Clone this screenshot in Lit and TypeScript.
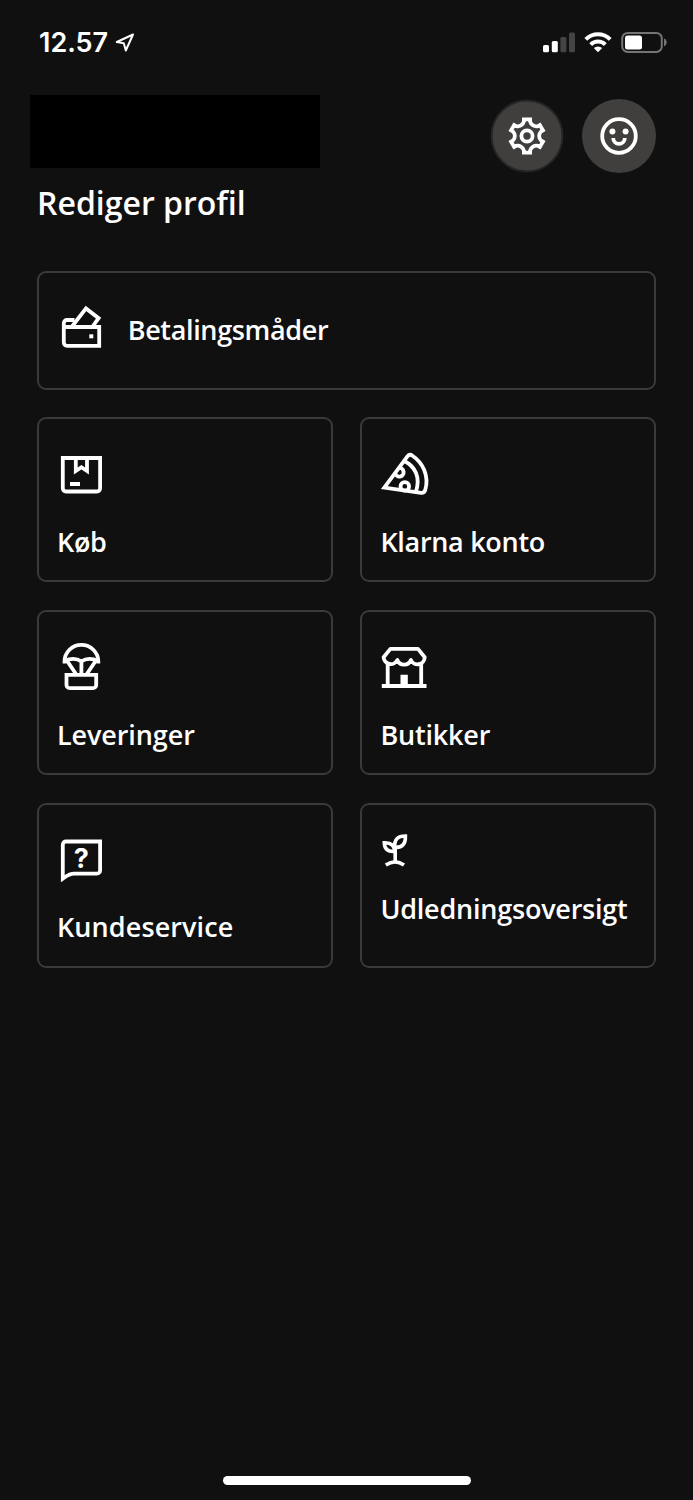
import { LitElement, html, svg, css } from "lit";
import { customElement, property } from "lit/decorators.js";
import { styleMap } from "lit/directives/style-map.js";

const wallet = svg`<path d="M17.5 17H10a3.2 3.2 0 0 0-3.2 3.2V39.6a3.2 3.2 0 0 0 3.2 3.2H42.2V24H7"/>
  <path d="M14.6 24L29 5.4L41.6 15.2L35.6 23.5"/><path class="solid" d="M32.3 31.3h4v4h-4z"/>`;
const box = svg`<path d="M5.8 8H43.1V38.3a3.2 3.2 0 0 1-3.2 3.2H9a3.2 3.2 0 0 1-3.2-3.2Z"/>
  <path d="M18.8 8V21L24.4 17.2L30 21V8"/><path class="solid" d="M13 32h10v4H13z"/>`;
const pizza = svg`<path d="M4.3 37.6L27.4 6.4Q29.6 3.6 32.5 5.7C42.5 12.5 49.5 25.5 45.2 40.2Q44.2 43.3 41 42.9Z"/>
  <path d="M24.2 11C35.5 16.5 40.5 27.5 36 41.5"/>
  <path d="M18.8 18A4.3 4.3 0 1 1 15.1 23"/><circle cx="24.8" cy="36.4" r="4.3"/>`;
const parachute = svg`<path d="M7.5 20.5V18.6a16.9 16.8 0 0 1 33.8 0V20.5"/>
  <path d="M7.5 18.2Q17 13.6 24.4 18.4Q31.8 13.6 41.3 18.2M10.2 18L19.3 31.5M38.6 18L29.5 31.5M24.4 18V31"/>
  <path d="M9.5 31.8H39.2V42a3.2 3.2 0 0 1-3.2 3.2H12.7A3.2 3.2 0 0 1 9.5 42Z"/>`;
const store = svg`<path stroke-linejoin="round" d="M10.4 5.9H38L44.7 14.2A7.2 7.2 0 0 1 30.9 17A7.3 7.3 0 0 1 17.3 17A7.2 7.2 0 0 1 3.6 14.2Z"/>
  <path d="M7.7 21V42M41.2 21V42"/><path class="solid" d="M1.8 41h44.7v4H1.8zM20.5 31.7h7.3V42h-7.3z"/>`;
const help = svg`<path d="M5.8 43.6V9.7a3.2 3.2 0 0 1 3.2-3.2H43.1V35.5a3.2 3.2 0 0 1-3.2 3.2H17C12.5 38.7 10.5 40.4 5.8 43.6Z"/>
  <text class="mark" x="24.4" y="32.8">?</text>`;
const sprout = svg`<path d="M25.4 1C17.8 1 13.9 4.4 14.9 12.3C22.3 13 25.8 8.6 25.4 1ZM4.3 7.7C10.9 7.4 14.4 10 14.9 16.4C8 17.1 4.4 14.2 4.3 7.7ZM15.2 12V26M5.8 30Q15.2 23.6 24 30"/>`;

const gearPath = (() => {
  const turn = (x: number, y: number, i: number) => {
    const a = (i * Math.PI) / 3;
    return `${(x * Math.cos(a) - y * Math.sin(a)).toFixed(2)} ${(x * Math.sin(a) + y * Math.cos(a)).toFixed(2)}`;
  };
  let d = "";
  for (let i = 0; i < 6; i++) {
    d += `${i ? "L" : "M"}${turn(-3.1, -16.6, i)}L${turn(3.1, -16.6, i)}L${turn(3.1, -14.4, i)}A6.4 6.4 0 0 0 ${turn(-3.1, -14.4, i + 1)}`;
  }
  return d + "Z";
})();

@customElement("menu-card")
class MenuCard extends LitElement {
  @property() label = "";
  @property({ type: Number }) tracking = 0;
  @property({ attribute: false }) icon: unknown = null;
  @property({ reflect: true }) variant = "tile";

  static styles = css`
    :host {
      display: flex;
      flex-direction: column;
      box-sizing: border-box;
      height: 165px;
      padding: 30.5px 18px 0;
      border: 2px solid #3a3a3a;
      border-radius: 9px;
    }
    :host([variant="wide"]) {
      flex-direction: row;
      align-items: center;
      height: 118.6px;
      padding: 0 18px;
      gap: 22.7px;
    }
    .icon {
      display: block;
      flex: none;
      width: 48px;
      height: 48px;
      overflow: visible;
      fill: none;
      stroke: #fff;
      stroke-width: 3.8;
    }
    :host([variant="wide"]) .icon { margin-top: -6px; }
    :host([variant="small"]) .icon { width: 32px; height: 32px; stroke-width: 3.6; }
    .solid { fill: #fff; stroke: none; }
    .mark {
      fill: #fff;
      stroke: none;
      font: 700 27px Inter, sans-serif;
      text-anchor: middle;
    }
    .label {
      margin-top: 24px;
      font: 600 27px/40px "Open Sans", sans-serif;
      color: #fff;
      white-space: nowrap;
    }
    :host([variant="small"]) .label { margin-top: 21.5px; }
    :host([variant="wide"]) .label { margin: 0; }
  `;

  render() {
    const s = this.variant === "small" ? 32 : 48;
    return html`<svg class="icon" viewBox="0 0 ${s} ${s}">${this.icon}</svg>
      <div class="label" style=${styleMap({ letterSpacing: `${this.tracking}px` })}>${this.label}</div>`;
  }
}

@customElement("app-root")
class AppRoot extends LitElement {
  static styles = css`
    :host {
      display: flex;
      flex-direction: column;
      box-sizing: border-box;
      height: 1500px;
      background: #101010;
      color: #fff;
      font-family: "Open Sans", sans-serif;
    }
    svg { display: block; overflow: visible; }
    .status {
      display: flex;
      align-items: center;
      height: 85px;
      padding: 0 26px 0 39px;
    }
    .time { font: 600 27px/32px Inter, sans-serif; padding-top: 1px; }
    .arrow { margin-left: 7px; }
    .signals { display: flex; gap: 9px; margin: 0 0 2px auto; }
    .header {
      display: flex;
      justify-content: space-between;
      padding: 10px 37px 0 29.5px;
      height: 78px;
    }
    .name { width: 290px; height: 73px; background: #000; }
    .actions { display: flex; gap: 18.3px; margin-top: 4px; }
    .title {
      padding-left: 37px;
      height: 98px;
      font-size: 32px;
      line-height: 60px;
      font-weight: 600;
    }
    .menu {
      display: grid;
      grid-template-columns: 1fr 1fr;
      gap: 27.8px;
      padding: 0 37px;
    }
    .wide { grid-column: span 2; }
    .home {
      width: 248px;
      height: 9.4px;
      margin: auto auto 14.6px 223px;
      border-radius: 5px;
      background: #fff;
    }
  `;

  render() {
    return html`
      <div class="status">
        <div class="time">12.57</div>
        <svg class="arrow" width="20" height="20" viewBox="0 0 20 20" fill="none" stroke="#fff" stroke-width="2" stroke-linejoin="round">
          <path d="M18 1.5L1.8 9L8.8 10.2L10.8 17.5Z" />
        </svg>
        <div class="signals">
          <svg width="32" height="22" viewBox="0 0 32 22" fill="#fff">
            <rect x="0" y="14" width="6" height="7.3" rx="1.5" />
            <rect x="8.8" y="10" width="6" height="11.3" rx="1.5" />
            <rect x="17.4" y="6" width="6" height="15.3" rx="1.5" fill="#444" />
            <rect x="26" y="1.5" width="6" height="19.8" rx="1.5" fill="#444" />
          </svg>
          <svg width="28" height="22" viewBox="0 0 28 22" fill="none" stroke="#fff" stroke-width="4">
            <path d="M1.8 8.3A17.3 17.3 0 0 1 26.2 8.3M6.7 13.6A10.4 10.4 0 0 1 21.3 13.6" />
            <path d="M14 21.3L9.8 17.1A6 6 0 0 1 18.2 17.1Z" fill="#fff" stroke="none" />
          </svg>
          <svg width="46" height="22" viewBox="0 0 46 22">
            <rect x="1.2" y="1.9" width="39.6" height="19" rx="5.5" fill="none" stroke="#747474" stroke-width="2" />
            <rect x="4" y="4.6" width="17" height="13.8" rx="2.5" fill="#fff" />
            <path d="M43 7.2Q45.7 8.4 45.7 11.3T43 15.4Z" fill="#747474" />
          </svg>
        </div>
      </div>
      <div class="header">
        <div class="name"></div>
        <div class="actions">
          <svg width="74" height="74" viewBox="-37 -37 74 74" fill="none" stroke="#fff" stroke-width="3.8">
            <circle r="35.5" fill="#403f3d" stroke="#242423" stroke-width="2" />
            <path d=${gearPath} />
            <circle r="5.6" />
          </svg>
          <svg width="74" height="74" viewBox="-37 -37 74 74" fill="none" stroke="#fff" stroke-width="3.8">
            <circle r="37" fill="#403f3d" stroke="none" />
            <circle r="16.8" />
            <path d="M-5.8 2A5.8 5.8 0 0 0 5.8 2" />
            <g fill="#fff" stroke="none"><circle cx="-6.6" cy="-4.6" r="3" /><circle cx="6.6" cy="-4.6" r="3" /></g>
          </svg>
        </div>
      </div>
      <div class="title">Rediger profil</div>
      <div class="menu">
        <menu-card class="wide" variant="wide" label="Betalingsmåder" tracking="-0.35" .icon=${wallet}></menu-card>
        <menu-card label="Køb" tracking="-0.3" .icon=${box}></menu-card>
        <menu-card label="Klarna konto" tracking="-0.3" .icon=${pizza}></menu-card>
        <menu-card label="Leveringer" tracking="-0.1" .icon=${parachute}></menu-card>
        <menu-card label="Butikker" tracking="-0.2" .icon=${store}></menu-card>
        <menu-card label="Kundeservice" tracking="0.1" .icon=${help}></menu-card>
        <menu-card variant="small" label="Udledningsoversigt" tracking="-0.22" .icon=${sprout}></menu-card>
      </div>
      <div class="home"></div>
    `;
  }
}
